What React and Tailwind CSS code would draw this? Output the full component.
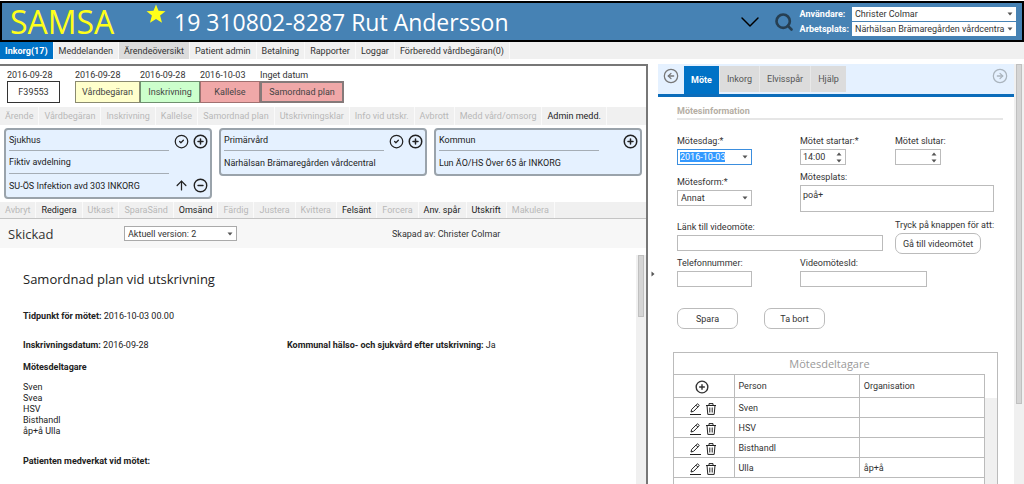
import { ArrowUp, ChevronDown, CircleArrowLeft, CircleArrowRight, CircleCheck, CircleMinus, CirclePlus, Search } from 'lucide-react';

const menu = [
  { label: 'Inkorg(17)', active: true },
  { label: 'Meddelanden' },
  { label: 'Ärendeöversikt', marked: true },
  { label: 'Patient admin' },
  { label: 'Betalning' },
  { label: 'Rapporter' },
  { label: 'Loggar' },
  { label: 'Förberedd vårdbegäran(0)' },
];

const steps = [
  { date: '2016-09-28', label: 'Vårdbegäran', width: 'w-[65px]', box: 'border border-[#8a8a70] bg-[#ffffcc]' },
  { date: '2016-09-28', label: 'Inskrivning', width: 'w-[60px]', box: 'border border-[#6f8f6f] bg-[#ccffcc]' },
  { date: '2016-10-03', label: 'Kallelse', width: 'w-[60px]', box: 'border border-[#a07070] bg-[#f0a8a8]' },
  { date: 'Inget datum', label: 'Samordnad plan', width: 'w-[84px]', box: 'border-2 border-[#857a7a] bg-[#f0a8a8]' },
];

const caseActions = [
  { label: 'Ärende' },
  { label: 'Vårdbegäran' },
  { label: 'Inskrivning' },
  { label: 'Kallelse' },
  { label: 'Samordnad plan' },
  { label: 'Utskrivningsklar' },
  { label: 'Info vid utskr.' },
  { label: 'Avbrott' },
  { label: 'Medd vård/omsorg' },
  { label: 'Admin medd.', enabled: true },
];

const documentActions = [
  { label: 'Avbryt' },
  { label: 'Redigera', enabled: true },
  { label: 'Utkast' },
  { label: 'SparaSänd' },
  { label: 'Omsänd', enabled: true },
  { label: 'Färdig' },
  { label: 'Justera' },
  { label: 'Kvittera' },
  { label: 'Felsänt', enabled: true },
  { label: 'Forcera' },
  { label: 'Anv. spår', enabled: true },
  { label: 'Utskrift', enabled: true },
  { label: 'Makulera' },
];

const participants = [
  { person: 'Sven', organisation: '' },
  { person: 'HSV', organisation: '' },
  { person: 'Bisthandl', organisation: '' },
  { person: 'Ulla', organisation: 'åp+å' },
];

function Caret({ className = '' }) {
  return (
    <svg viewBox="0 0 6 4" className={`pointer-events-none h-1 w-1.5 fill-[#555] ${className}`} aria-hidden="true">
      <path d="M0.5 0.5h5L3 3.5z" />
    </svg>
  );
}

function Select({ id, value, label, className = '' }) {
  return (
    <div className={`relative flex items-center ${className}`}>
      <select id={id} aria-label={label} defaultValue={value} className="h-full w-full appearance-none bg-white pl-[3px] pr-2 outline-none">
        <option>{value}</option>
      </select>
      <Caret className="absolute right-[3px]" />
    </div>
  );
}

function Spinner({ id, value }) {
  return (
    <div className="flex h-4 w-[46px] items-center border border-[#bbb] bg-white">
      <input id={id} defaultValue={value} className="h-full w-0 flex-1 pl-[2px] outline-none" />
      <div className="flex flex-col gap-[3px] pr-[3px]">
        <button aria-label="Öka" className="rotate-180"><Caret /></button>
        <button aria-label="Minska"><Caret /></button>
      </div>
    </div>
  );
}

function Field({ id, label, className = '', children }) {
  return (
    <div className={`flex flex-col items-start gap-[2px] ${className}`}>
      <label htmlFor={id} className="whitespace-nowrap">{label}</label>
      {children}
    </div>
  );
}

function PencilIcon() {
  return (
    <svg viewBox="0 0 12 12" className="h-3 w-3" fill="none" stroke="#222" strokeLinejoin="round" aria-hidden="true">
      <path d="M2 9l.7-2.6L7.9 1.2a.9.9 0 0 1 1.3 0l.6.6a.9.9 0 0 1 0 1.3L4.6 8.3zM7 2.2l1.9 1.9" />
      <path d="M1 11.5h11" />
    </svg>
  );
}

function TrashIcon() {
  return (
    <svg viewBox="0 0 12 12" className="h-3 w-3" fill="none" stroke="#222" strokeLinejoin="round" aria-hidden="true">
      <path d="M1 2.5h10M4 2.5V.6h4v1.9M2 2.5l.8 8.9h6.4l.8-8.9M4.8 4.5v5M7.2 4.5v5" />
    </svg>
  );
}

function Unit({ title, rows, check, removable }) {
  return (
    <section className="flex min-w-0 flex-1 justify-between rounded border-2 border-[#9aa3ab] bg-[#e5f1ff] pl-[3px] pr-[2px] text-[#222]">
      <div className="w-40">
        <h2 className="flex h-[21px] items-center border-b border-[#a5adb5]">{title}</h2>
        {rows.map((row, i) => (
          <p key={row} className={`flex h-[23px] items-center whitespace-nowrap ${i < rows.length - 1 ? 'border-b border-[#a5adb5]' : ''}`}>
            {row}
          </p>
        ))}
      </div>
      <div className="flex flex-col justify-between py-1">
        <div className="flex justify-end gap-1">
          {check && <button aria-label="Bekräfta"><CircleCheck className="h-[15px] w-[15px]" strokeWidth={2} /></button>}
          <button aria-label="Lägg till"><CirclePlus className="h-[15px] w-[15px]" strokeWidth={2.4} /></button>
        </div>
        {removable && (
          <div className="flex justify-end gap-1">
            <button aria-label="Flytta upp"><ArrowUp className="h-[15px] w-[15px]" strokeWidth={2} /></button>
            <button aria-label="Ta bort enhet"><CircleMinus className="h-[15px] w-[15px]" strokeWidth={2.2} /></button>
          </div>
        )}
      </div>
    </section>
  );
}

function Header() {
  return (
    <header className="mt-px flex h-[41px] shrink-0 items-center border-2 border-black bg-[#4682b4] pl-2 pr-[6px] text-white">
      <span className="w-[136px] font-['Open_Sans',sans-serif] text-[32px] leading-9 text-[#ffff1a]">SAMSA</span>
      <svg viewBox="0 0 20 20" className="mb-4 h-5 w-5 fill-[#ffff1a]" aria-hidden="true">
        <path d="M10 .5l2.5 6.3 7 .5-5.4 4.3 1.9 7.2-6-3.9-6 3.9 1.9-7.2L.5 7.3l7-.5z" />
      </svg>
      <h1 className="ml-2 flex-1 whitespace-nowrap font-['Open_Sans',sans-serif] text-[23px] leading-8">19 310802-8287 Rut Andersson</h1>
      <button aria-label="Visa mer" className="mr-2 text-black"><ChevronDown className="h-8 w-8" strokeWidth={1.1} /></button>
      <button aria-label="Sök" className="mr-[6px] text-[#263f52]"><Search className="h-5 w-5" strokeWidth={3.2} /></button>
      <div className="grid grid-cols-[auto_164px] items-center gap-x-[3px] gap-y-px">
        <label htmlFor="user" className="font-bold">Användare:</label>
        <Select id="user" value="Christer Colmar" className="h-[14px] text-[#333]" />
        <label htmlFor="workplace" className="font-bold">Arbetsplats:</label>
        <Select id="workplace" value="Närhälsan Brämaregården vårdcentra" className="h-[14px] text-[#333]" />
      </div>
    </header>
  );
}

function ActionBar({ actions, className = '' }) {
  return (
    <div className={`flex bg-[#f0f0f0] ${className}`}>
      {actions.map(({ label, enabled }) => (
        <button key={label} disabled={!enabled} className="whitespace-nowrap border-r border-[#fafafa] px-[5px] text-[#222] disabled:text-[#b8b8b8]">
          {label}
        </button>
      ))}
    </div>
  );
}

function CasePanel() {
  return (
    <main className="flex min-w-0 flex-1 flex-col border-r-2 border-t-2 border-[#777]">
      <div className="flex items-end px-[7px] pt-[3px]">
        <div className="mr-[15px] w-[53px]">
          <p>2016-09-28</p>
          <div className="flex h-[22px] items-center justify-center border border-[#333]">F39553</div>
        </div>
        {steps.map((step) => (
          <div key={step.label} className={step.width}>
            <p>{step.date}</p>
            <button className={`h-[22px] w-full whitespace-nowrap text-[#444] ${step.box}`}>{step.label}</button>
          </div>
        ))}
      </div>

      <ActionBar actions={caseActions} className="mt-1 h-[18px]" />

      <div className="my-[3px] flex items-start gap-[7px] px-1">
        <Unit title="Sjukhus" rows={['Fiktiv avdelning', 'SU-ÖS Infektion avd 303 INKORG']} check removable />
        <Unit title="Primärvård" rows={['Närhälsan Brämaregården vårdcentral']} check />
        <Unit title="Kommun" rows={['Lun ÄO/HS Över 65 år INKORG']} />
      </div>

      <ActionBar actions={documentActions} className="h-[17px] border-b border-[#c4c4c4]" />

      <div className="flex h-[29px] items-center bg-[#f7f7f7] pl-2">
        <h2 className="w-[116px] font-['Open_Sans',sans-serif] text-[13px]">Skickad</h2>
        <Select id="version" label="Version" value="Aktuell version: 2" className="h-[15px] w-[113px] border border-[#aaa]" />
        <p className="ml-[155px]">Skapad av: Christer Colmar</p>
      </div>

      <div className="mt-[7px] flex min-h-0 flex-1">
        <article className="min-w-0 flex-1 overflow-hidden pl-[23px] pt-3 text-[#222]">
          <h2 className="font-['Open_Sans',sans-serif] text-[13px] leading-6">Samordnad plan vid utskrivning</h2>
          <p className="mt-[19px]"><b>Tidpunkt för mötet:</b> 2016-10-03 00.00</p>
          <div className="mt-[17px] flex">
            <p className="w-[264px]"><b>Inskrivningsdatum:</b> 2016-09-28</p>
            <p><b>Kommunal hälso- och sjukvård efter utskrivning:</b> Ja</p>
          </div>
          <h3 className="mt-[10px] font-bold">Mötesdeltagare</h3>
          <ul className="mt-[9px] leading-[11px]">
            {['Sven', 'Svea', 'HSV', 'Bisthandl', 'åp+å Ulla'].map((name) => <li key={name}>{name}</li>)}
          </ul>
          <h3 className="mt-[18px] font-bold">Patienten medverkat vid mötet:</h3>
        </article>
        <div className="w-[10px] bg-[#f0f0f0] px-[2px]">
          <div className="h-[62px] border border-[#c0c0c0] bg-[#d5d5d5]" />
        </div>
      </div>
    </main>
  );
}

function MeetingForm() {
  return (
    <form className="px-[19px]" onSubmit={(e) => e.preventDefault()}>
      <h2 className="-mr-2 mt-2 border-b-2 border-[#e6e6e6] pb-px font-bold text-[#b5aea4]">Mötesinformation</h2>
      <div className="mt-[15px] grid grid-cols-[123px_95px_99px]">
        <Field id="day" label="Mötesdag:*">
          <div className="flex h-4 w-[75px] items-center border border-[#3b8ede] bg-white pr-[3px]">
            <input
              id="day"
              autoFocus
              onFocus={(e) => e.target.select()}
              defaultValue="2016-10-03"
              className="h-full w-0 flex-1 pl-[2px] outline-none selection:bg-[#3399ff] selection:text-white"
            />
            <Caret />
          </div>
        </Field>
        <Field id="start" label="Mötet startar:*"><Spinner id="start" value="14:00" /></Field>
        <Field id="end" label="Mötet slutar:"><Spinner id="end" value="" /></Field>

        <Field id="form" label="Mötesform:*" className="pt-[11px]">
          <Select id="form" value="Annat" className="h-4 w-[75px] border border-[#bbb]" />
        </Field>
        <Field id="place" label="Mötesplats:" className="col-span-2 pt-[6px]">
          <textarea id="place" defaultValue="poå+" className="h-[27px] w-full resize-none border border-[#bbb] px-[2px] py-[3px] outline-none" />
        </Field>

        <Field id="link" label="Länk till videomöte:" className="col-span-2 pt-[9px]">
          <input id="link" className="h-4 w-[206px] border border-[#bbb] px-[2px]" />
        </Field>
        <div className="pt-[7px]">
          <p className="whitespace-nowrap">Tryck på knappen för att:</p>
          <button className="mt-[2px] h-[21px] w-[86px] whitespace-nowrap rounded-[7px] border border-[#bbb]">Gå till videomötet</button>
        </div>

        <Field id="phone" label="Telefonnummer:" className="pt-[3px]">
          <input id="phone" className="h-4 w-[75px] border border-[#bbb] px-[2px]" />
        </Field>
        <Field id="video" label="VideomötesId:" className="col-span-2 pt-[3px]">
          <input id="video" className="h-4 w-[127px] border border-[#bbb] px-[2px]" />
        </Field>
      </div>
      <div className="mt-[21px] flex gap-[26px]">
        <button className="h-[21px] w-[61px] rounded-[7px] border border-[#bbb]">Spara</button>
        <button className="h-[21px] w-[61px] rounded-[7px] border border-[#bbb]">Ta bort</button>
      </div>
    </form>
  );
}

function Participants() {
  return (
    <section className="ml-[15px] mr-4 mt-[23px] border border-b-0 border-[#bbb]">
      <h2 className="flex h-[21px] items-center justify-center pr-3 font-['Open_Sans',sans-serif] text-[11px] text-[#999]">Mötesdeltagare</h2>
      <div className="flex">
        <table className="w-full flex-1 table-fixed border-collapse border-r border-[#bbb] text-left">
          <thead>
            <tr className="h-[23px] border-y border-[#bbb]">
              <th className="w-[60px] border-r border-[#bbb] text-center">
                <button aria-label="Lägg till deltagare" className="block w-full pr-1 pt-[2px]"><CirclePlus className="mx-auto h-[14px] w-[14px]" strokeWidth={2.4} /></button>
              </th>
              <th className="border-r border-[#bbb] pl-1 font-normal">Person</th>
              <th className="pl-1 font-normal">Organisation</th>
            </tr>
          </thead>
          <tbody>
            {participants.map(({ person, organisation }) => (
              <tr key={person} className="h-5 border-b border-[#bbb]">
                <td className="border-r border-[#bbb]">
                  <div className="flex justify-center gap-1 pr-[2px] pt-[3px]">
                    <button aria-label={`Redigera ${person}`}><PencilIcon /></button>
                    <button aria-label={`Radera ${person}`}><TrashIcon /></button>
                  </div>
                </td>
                <td className="border-r border-[#bbb] pl-1">{person}</td>
                <td className="pl-1">{organisation}</td>
              </tr>
            ))}
            <tr className="h-5"><td colSpan={3} /></tr>
          </tbody>
        </table>
        <div className="mt-6 w-3 bg-[#f0f0f0]" />
      </div>
    </section>
  );
}

function MeetingPanel() {
  return (
    <aside className="flex w-[366px] shrink-0">
      <div className="min-w-0 flex-1 overflow-hidden">
        <nav className="flex h-[33px] border-b-[3px] border-[#0b6cba] bg-[#e5f1ff] pl-[5px] pr-[6px]">
          <button aria-label="Bakåt" className="mr-[5px] self-start pt-1 text-[#777]"><CircleArrowLeft className="h-4 w-4" strokeWidth={1.9} /></button>
          <button className="mt-[2px] bg-[#0072c6] px-[7px] font-bold text-white">Möte</button>
          {['Inkorg', 'Elvisspår', 'Hjälp'].map((tab) => (
            <button key={tab} className="mb-[2px] mt-[2px] border-l border-[#e8e8e8] bg-[#dcdcdc] px-[7px] text-[#555]">{tab}</button>
          ))}
          <button aria-label="Framåt" className="ml-auto self-start pt-1 text-[#aab4bd]"><CircleArrowRight className="h-4 w-4" strokeWidth={1.9} /></button>
        </nav>
        <MeetingForm />
        <Participants />
      </div>
      <div className="w-[10px] bg-[#f0f0f0] px-[2px]">
        <div className="h-[340px] border border-[#c0c0c0] bg-[#d5d5d5]" />
      </div>
    </aside>
  );
}

export default function App() {
  return (
    <div className="flex h-screen flex-col overflow-hidden bg-white font-[Roboto,sans-serif] text-[9px] leading-3 text-[#333]">
      <Header />
      <nav className="flex h-[17px] shrink-0 bg-[#f0f0f0]">
        {menu.map(({ label, active, marked }) => (
          <button
            key={label}
            className={`whitespace-nowrap border-r border-[#fafafa] px-[5px] ${active ? 'bg-[#0072c6] font-bold text-white' : ''} ${marked ? 'bg-[#dcdcdc]' : ''}`}
          >
            {label}
          </button>
        ))}
      </nav>
      <div className="mt-[5px] flex min-h-0 flex-1">
        <CasePanel />
        <button aria-label="Fäll ihop panelen" className="flex w-[10px] shrink-0 items-center justify-center">
          <Caret className="-rotate-90" />
        </button>
        <MeetingPanel />
      </div>
    </div>
  );
}
